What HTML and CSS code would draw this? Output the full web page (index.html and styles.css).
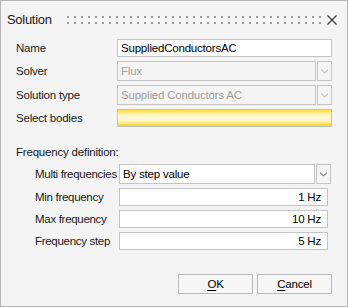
FILE: index.html
```html
<!DOCTYPE html>
<html>
<head>
<meta charset="utf-8">
<link rel="stylesheet" href="styles.css">
</head>
<body>
<div class="dialog">
  <div class="titlebar">
    <span class="title">Solution</span>
    <span class="grip"></span>
    <svg class="close" width="10" height="10" viewBox="0 0 10 10"><path d="M0.5 0.5 L9.5 9.5 M9.5 0.5 L0.5 9.5" stroke="#333" stroke-width="1.1" fill="none"/></svg>
  </div>
  <div class="form">
    <div class="row r-name">
      <span class="label">Name</span>
      <div class="field text">SuppliedConductorsAC</div>
    </div>
    <div class="row r-combo">
      <span class="label">Solver</span>
      <div class="combo disabled">
        <div class="field cval">Flux</div>
        <div class="btn"><svg width="7" height="5" viewBox="0 0 7 5"><path d="M0 0 L3.5 3 L7 0 L7 1.6 L3.5 4.6 L0 1.6 Z" fill="#c8c8c8"/></svg></div>
      </div>
    </div>
    <div class="row r-combo">
      <span class="label">Solution type</span>
      <div class="combo disabled">
        <div class="field cval">Supplied Conductors AC</div>
        <div class="btn"><svg width="7" height="5" viewBox="0 0 7 5"><path d="M0 0 L3.5 3 L7 0 L7 1.6 L3.5 4.6 L0 1.6 Z" fill="#c8c8c8"/></svg></div>
      </div>
    </div>
    <div class="row r-sel">
      <span class="label">Select bodies</span>
      <div class="field yellow"></div>
    </div>

    <div class="section">Frequency definition:</div>

    <div class="row sub r-combo">
      <span class="label">Multi frequencies</span>
      <div class="combo">
        <div class="field cval dark">By step value</div>
        <div class="btn"><svg width="7" height="5" viewBox="0 0 7 5"><path d="M0 0 L3.5 3 L7 0 L7 1.6 L3.5 4.6 L0 1.6 Z" fill="#8a8a8a"/></svg></div>
      </div>
    </div>
    <div class="row sub r-num">
      <span class="label">Min frequency</span>
      <div class="field num">1 Hz</div>
    </div>
    <div class="row sub r-num">
      <span class="label">Max frequency</span>
      <div class="field num">10 Hz</div>
    </div>
    <div class="row sub r-num">
      <span class="label">Frequency step</span>
      <div class="field num">5 Hz</div>
    </div>
  </div>
  <div class="buttons">
    <div class="button"><u>O</u>K</div>
    <div class="button"><u>C</u>ancel</div>
  </div>
</div>
</body>
</html>
```
FILE: styles.css
```css
html, body {
  margin: 0;
  padding: 0;
  background: #f4f4f4;
}
body {
  width: 348px;
  height: 307px;
  font-family: "Liberation Sans", Arial, sans-serif;
  font-size: 11.5px;
  letter-spacing: -0.2px;
  color: #1a1a1a;
}
.dialog {
  box-sizing: border-box;
  width: 348px;
  height: 307px;
  border: 1px solid #b4b4b4;
  background: #f4f4f4;
  display: flex;
  flex-direction: column;
}
.titlebar {
  height: 37px;
  display: flex;
  align-items: center;
  padding-left: 6px;
  padding-right: 10px;
  box-sizing: border-box;
}
.title {
  font-size: 13px;
  letter-spacing: -0.3px;
  color: #1a1a1a;
  width: 60px;
}
.grip {
  width: 254px;
  height: 8px;
  background-image: radial-gradient(circle at 1px 1px, #9a9a9a 0.9px, transparent 1.1px);
  background-size: 7px 6px;
  margin-right: 6px;
}
.close {
  display: block;
}
.form {
  display: flex;
  flex-direction: column;
  padding-left: 15px;
}
.row {
  display: flex;
  align-items: center;
}
.label {
  width: 101px;
  flex: none;
  white-space: nowrap;
}
.row.sub {
  padding-left: 19px;
}
.row.sub .label {
  width: 84px;
  letter-spacing: -0.3px;
}
.field {
  box-sizing: border-box;
  border: 1px solid #c4c4c4;
  background: #fff;
  padding: 0 3px;
  line-height: 16px;
  white-space: nowrap;
  overflow: hidden;
}
.r-name { height: 18px; margin-top: 1px; }
.r-name .field { width: 215px; height: 18px; color: #000; }
.r-combo { height: 20px; margin-top: 4px; }
.combo {
  display: flex;
  width: 215px;
  height: 20px;
}
.combo .field {
  flex: 1;
  height: 20px;
  line-height: 18px;
}
.combo .btn {
  box-sizing: border-box;
  width: 15px;
  height: 20px;
  border: 1px solid #c4c4c4;
  margin-left: 1px;
  display: flex;
  align-items: center;
  justify-content: center;
  background: #f4f4f4;
}
.combo.disabled .field {
  background: #f4f4f4;
  color: #a0a0a0;
}
.combo .field.dark {
  color: #000;
}
.r-sel { height: 18px; margin-top: 4px; }
.field.yellow {
  width: 215px;
  height: 18px;
  border-color: #c4c4c4;
  background: linear-gradient(to bottom, #f9dc3e 0%, #fff4b8 30%, #fffbe0 50%, #fff4b8 70%, #f5d415 100%);
}
.section {
  margin-top: 18px;
  height: 15px;
  line-height: 15px;
}
.row.sub.r-combo { margin-top: 4px; }
.row.sub.r-combo .combo { width: 212px; }
.r-num { height: 18px; margin-top: 4px; }
.r-num .field {
  width: 209px;
  height: 18px;
  text-align: right;
  padding-right: 6px;
  color: #000;
}
.buttons {
  display: flex;
  justify-content: flex-end;
  gap: 4px;
  padding-right: 15px;
  margin-top: 24px;
}
.button {
  box-sizing: border-box;
  width: 75px;
  height: 20px;
  border: 1px solid #b8b8b8;
  background: #f6f6f6;
  text-align: center;
  line-height: 18px;
  color: #000;
}
.button u {
  text-decoration-thickness: 1px;
  text-underline-offset: 2px;
}
```
